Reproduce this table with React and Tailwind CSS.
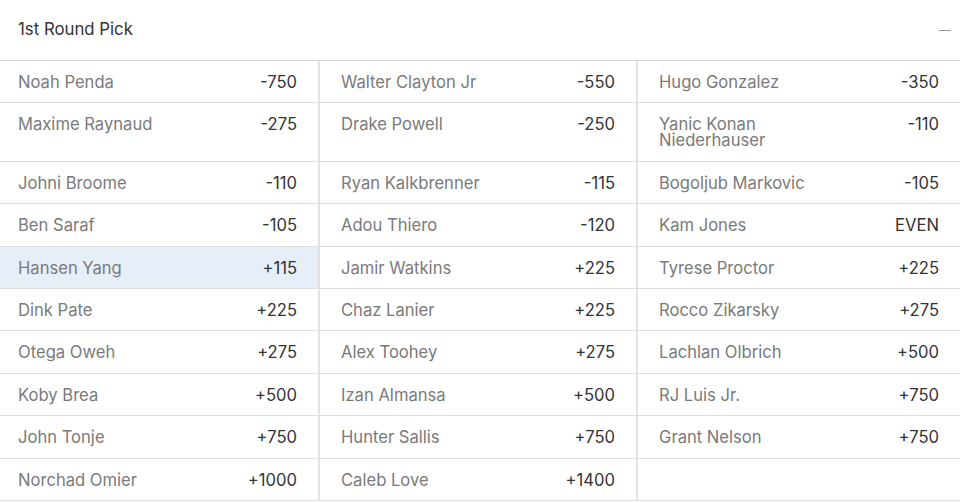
import React from "react";

const rows = [
    [["Noah Penda", "-750"], ["Walter Clayton Jr", "-550"], ["Hugo Gonzalez", "-350"]],
    [["Maxime Raynaud", "-275"], ["Drake Powell", "-250"], ["Yanic Konan Niederhauser", "-110"]],
    [["Johni Broome", "-110"], ["Ryan Kalkbrenner", "-115"], ["Bogoljub Markovic", "-105"]],
    [["Ben Saraf", "-105"], ["Adou Thiero", "-120"], ["Kam Jones", "EVEN"]],
    [["Hansen Yang", "+115"], ["Jamir Watkins", "+225"], ["Tyrese Proctor", "+225"]],
    [["Dink Pate", "+225"], ["Chaz Lanier", "+225"], ["Rocco Zikarsky", "+275"]],
    [["Otega Oweh", "+275"], ["Alex Toohey", "+275"], ["Lachlan Olbrich", "+500"]],
    [["Koby Brea", "+500"], ["Izan Almansa", "+500"], ["RJ Luis Jr.", "+750"]],
    [["John Tonje", "+750"], ["Hunter Sallis", "+750"], ["Grant Nelson", "+750"]],
    [["Norchad Omier", "+1000"], ["Caleb Love", "+1400"], null],
];

function Cell({ pick, col, active }) {
    const pad = col === 0 ? "pl-[18px] pr-[21px]" : "pl-[21px] pr-[21px]";
    const side = col < 2 ? "border-r-2 border-r-[#e2e2e2]" : "";
    return (
        <div className={`flex items-start justify-between border-b border-[#dedede] pt-[13px] pb-[12.4px] ${pad} ${side} ${active ? "bg-[#e6eef7]" : "bg-white"}`}>
            {pick && (
                <>
                    <span className="text-[16.6px] leading-[16px] text-[#7a7a7a] max-w-[170px]">{pick[0]}</span>
                    <span className="text-[16.6px] leading-[16px] text-[#333]">{pick[1]}</span>
                </>
            )}
        </div>
    );
}

export default function App() {
    return (
        <div className="w-[960px] h-[503px] overflow-hidden bg-white" style={{ fontFamily: "Inter, 'Noto Sans', sans-serif" }}>
            <div className="flex items-center justify-between h-[61px] pl-[18px] pr-[8px] border-b border-[#d6d6d6]">
                <span className="text-[16.8px] text-[#333]">1st Round Pick</span>
                <span className="w-[12px] h-[1px] bg-[#999] mr-[1px]"></span>
            </div>
            <div className="grid grid-cols-[320px_318px_322px]">
                {rows.map((r, i) =>
                    r.map((pick, j) => (
                        <Cell key={i + "-" + j} pick={pick} col={j} active={i === 4 && j === 0} />
                    ))
                )}
            </div>
        </div>
    );
}
